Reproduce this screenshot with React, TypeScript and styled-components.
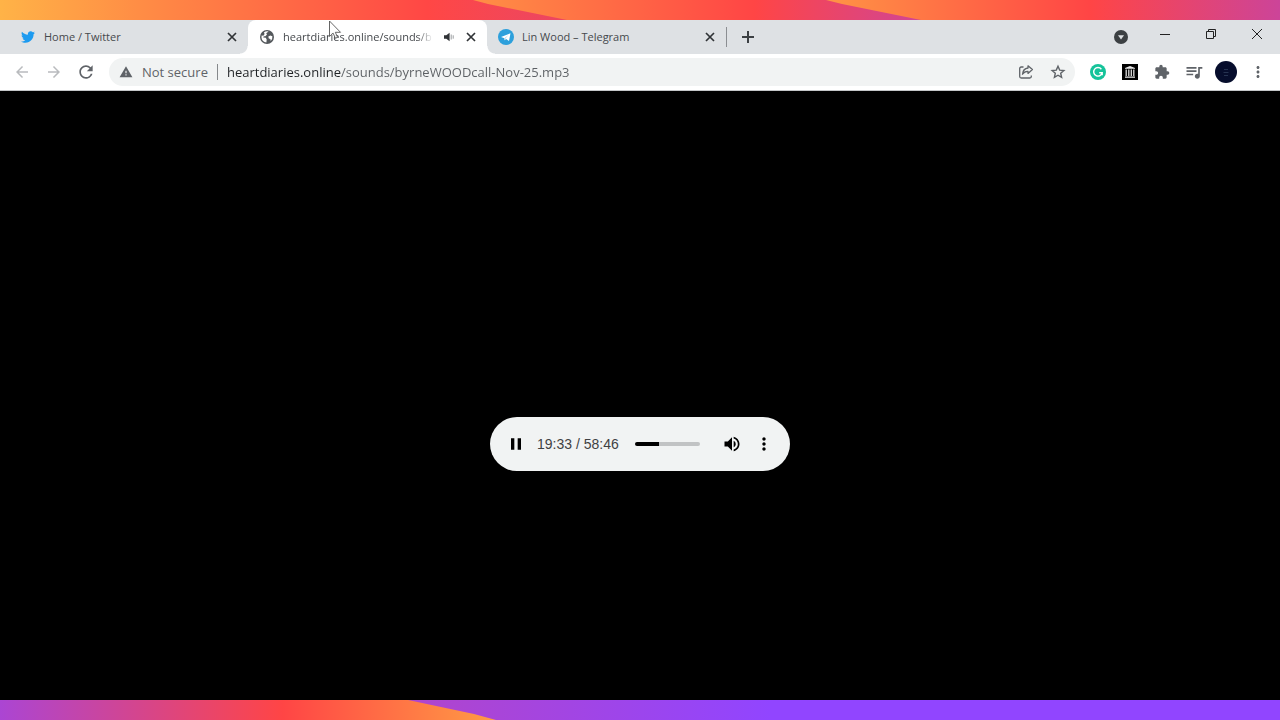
import React, { useState } from "react";
import styled, { createGlobalStyle, css } from "styled-components";
import { FaTwitter } from "react-icons/fa";
import {
  MdArrowBack,
  MdArrowForward,
  MdExtension,
  MdMoreVert,
  MdPause,
  MdQueueMusic,
  MdRefresh,
  MdVolumeUp,
  MdWarning,
} from "react-icons/md";

const GlobalStyle = createGlobalStyle`
  *, *::before, *::after { box-sizing: border-box; }
  body {
    margin: 0;
    background: #000;
    font-family: "Open Sans", "Noto Sans", sans-serif;
  }
  button, input { font: inherit; }
`;

const Screen = styled.div`
  position: relative;
  display: flex;
  flex-direction: column;
  min-height: 100vh;
`;

const Wallpaper = styled.svg`
  display: block;
  flex: none;
  width: 100%;
  height: 20px;
`;

const BrowserWindow = styled.div`
  display: flex;
  flex: 1;
  flex-direction: column;
`;

const TabStrip = styled.header`
  display: flex;
  height: 34px;
  padding-left: 9px;
  background: #dee1e4;
`;

const activeTab = css`
  background: #fff;
  border-radius: 8px 8px 0 0;

  &::before,
  &::after {
    content: "";
    position: absolute;
    bottom: 0;
    width: 8px;
    height: 8px;
  }
  &::before {
    right: 100%;
    background: radial-gradient(circle at 0 0, #dee1e4 7px, #fff 8px);
  }
  &::after {
    left: 100%;
    background: radial-gradient(circle at 100% 0, #dee1e4 7px, #fff 8px);
  }
`;

const Tab = styled.div<{ $active?: boolean }>`
  position: relative;
  display: flex;
  flex: 0 1 239px;
  align-items: center;
  gap: 8px;
  min-width: 0;
  padding: 0 8px 0 11px;
  color: #46494d;
  ${(p) => p.$active && activeTab}
`;

const TabIcon = styled.span`
  display: flex;
  flex: none;
  align-items: center;
  justify-content: center;
  width: 16px;
  height: 16px;
`;

const TabTitle = styled.span<{ $faded?: boolean }>`
  flex: 1;
  min-width: 0;
  overflow: hidden;
  font-size: 11px;
  line-height: 16px;
  white-space: nowrap;
  ${(p) =>
    p.$faded &&
    css`
      mask-image: linear-gradient(to right, #000 calc(100% - 16px), transparent);
    `}
`;

const TabActions = styled.div`
  display: flex;
  flex: none;
  gap: 6px;
`;

const PlainButton = styled.button`
  display: flex;
  flex: none;
  align-items: center;
  justify-content: center;
  padding: 0;
  border: 0;
  background: none;
  color: inherit;
`;

const TabButton = styled(PlainButton)`
  width: 16px;
  height: 16px;
  color: #303336;
`;

const TabDivider = styled.span`
  flex: none;
  align-self: center;
  width: 1px;
  height: 20px;
  background: #8b8e92;
`;

const NewTabButton = styled(PlainButton)`
  width: 28px;
  margin-left: 7px;
  color: #3c4043;
`;

const WindowControls = styled.div`
  display: flex;
  align-items: flex-start;
  margin-left: auto;
`;

const TabSearchButton = styled(PlainButton)`
  width: 32px;
  height: 34px;
  margin-right: 5px;
`;

const WindowButton = styled(PlainButton)`
  width: 46px;
  height: 28px;
  color: #222;
`;

const Toolbar = styled.nav`
  display: flex;
  align-items: center;
  height: 37px;
  padding: 0 6px;
  border-bottom: 1px solid #c4c6c8;
  background: #fff;
`;

const ToolButton = styled(PlainButton)<{ $dim?: boolean }>`
  width: 32px;
  height: 28px;
  color: ${(p) => (p.$dim ? "#b9bbbe" : "#5f6368")};
`;

const AddressBar = styled.form`
  display: flex;
  flex: 1;
  align-items: center;
  min-width: 0;
  height: 28px;
  margin: 0 7px;
  padding: 0 1px 0 10px;
  border-radius: 14px;
  background: #f1f3f3;
  color: #5f6368;
  font-size: 13px;
  line-height: 20px;
`;

const SecurityButton = styled(PlainButton)`
  gap: 9px;
  padding-right: 9px;
  border-right: 1px solid #85888b;
  line-height: 16px;
`;

/* The host part of the address is darker than its path. */
const AddressInput = styled.input`
  flex: 1;
  min-width: 0;
  margin-left: 9px;
  padding: 0;
  border: 0;
  outline: 0;
  background: linear-gradient(to right, #202326 114px, #5c6064 114px);
  background-clip: text;
  color: #5c6064;
  -webkit-text-fill-color: transparent;
`;

const Page = styled.main`
  display: flex;
  flex: 1;
  align-items: center;
  justify-content: center;
  padding-top: 96px;
  background: #000;
`;

const Player = styled.section`
  display: flex;
  align-items: center;
  width: 300px;
  height: 54px;
  padding: 0 10px;
  border-radius: 27px;
  background: #f1f3f3;
  color: #000;
`;

const PlayerButton = styled(PlainButton)`
  width: 32px;
  height: 32px;
`;

const PlayerTime = styled.span`
  margin-left: 5px;
  color: #3f4143;
  font-family: "Liberation Sans", Arial, sans-serif;
  font-size: 14px;
  line-height: 20px;
  white-space: nowrap;
`;

const Timeline = styled.input`
  flex: 1;
  min-width: 0;
  height: 4px;
  margin: 0 16px;
  border-radius: 2px;
  outline: 0;
  appearance: none;

  &::-webkit-slider-thumb {
    appearance: none;
    width: 4px;
    height: 4px;
    border-radius: 2px;
    background: transparent;
  }
`;

const Pointer = styled.svg`
  position: absolute;
  top: 20px;
  left: 329px;
  pointer-events: none;
`;

const GlobeIcon = () => (
  <svg width="16" height="16" viewBox="0 0 16 16" aria-hidden="true">
    <circle cx="8" cy="8" r="7" fill="#54585c" />
    <path
      d="M9.600 2.600 7.200 4.200l.8 1.200L6.400 7.200H4.800l-.6 1.200 2.600.4.900 1.700-.3 3A5.600 5.600 0 0 1 2.500 8.800L2.600 6.500 4.400 6.700 5.600 5 4.900 3.400A5.600 5.600 0 0 1 9.600 2.600Z"
      fill="#fff"
    />
    <path d="M13.400 7.200 11.300 6.600 9.300 7.600l.5 1.900 1.600.5.300 1.900A5.600 5.600 0 0 0 13.400 7.200Z" fill="#fff" />
  </svg>
);

const TelegramIcon = () => (
  <svg width="16" height="16" viewBox="0 0 16 16" aria-hidden="true">
    <circle cx="8" cy="8" r="8" fill="#2da0dc" />
    <path d="M3 7.9 12.5 4.2 11 12 8.1 9.9 6.6 11.3 6.4 9.2Z" fill="#fff" />
    <path d="m6.4 9.2 4-3.2-2.9 3.5-.9 1.8Z" fill="#b4d7ec" />
  </svg>
);

const SoundIcon = () => (
  <svg width="12" height="12" viewBox="0 0 12 12" aria-hidden="true">
    <path d="M1 4.200h2.300L6.600 1.800v8.400L3.300 7.800H1Z" fill="currentColor" />
    <path d="M8.200 3.500v5M10.200 4.300v3.400" fill="none" stroke="#9a9da0" />
  </svg>
);

const CloseTabIcon = () => (
  <svg width="16" height="16" viewBox="0 0 16 16" aria-hidden="true">
    <path d="m4 4 8 8M12 4l-8 8" stroke="currentColor" strokeWidth="1.700" />
  </svg>
);

const PlusIcon = () => (
  <svg width="12" height="12" viewBox="0 0 12 12" aria-hidden="true">
    <path d="M6 0v12M0 6h12" stroke="currentColor" strokeWidth="2" />
  </svg>
);

const StarIcon = () => (
  <svg width="16" height="16" viewBox="0 0 16 16" aria-hidden="true">
    <path
      d="m8 2.200 1.700 3.900 4.200.4-3.200 2.800.9 4.100L8 11.200l-3.600 2.200.9-4.100L2.100 6.500l4.200-.4Z"
      fill="none"
      stroke="currentColor"
      strokeWidth="1.400"
    />
  </svg>
);

const TabSearchIcon = () => (
  <svg width="14" height="14" viewBox="0 0 14 14" aria-hidden="true">
    <circle cx="7" cy="7" r="7" fill="#3c4043" />
    <path d="M4 5.2h6L7 9.4Z" fill="#dee1e4" />
  </svg>
);

const MinimizeIcon = () => (
  <svg width="10" height="10" viewBox="0 0 10 10" aria-hidden="true">
    <path d="M0 5.5h10" stroke="currentColor" />
  </svg>
);

const RestoreIcon = () => (
  <svg width="10" height="10" viewBox="0 0 10 10" fill="none" stroke="currentColor" aria-hidden="true">
    <path d="M.5 2.5h7v7h-7ZM2.5 2.5v-2h7v7h-2" />
  </svg>
);

const CloseWindowIcon = () => (
  <svg width="10" height="10" viewBox="0 0 10 10" stroke="currentColor" aria-hidden="true">
    <path d="m0 0 10 10M10 0 0 10" />
  </svg>
);

const ShareIcon = () => (
  <svg
    width="16"
    height="16"
    viewBox="0 0 16 16"
    fill="none"
    stroke="currentColor"
    strokeWidth="1.3"
    strokeLinejoin="round"
    aria-hidden="true"
  >
    <path d="M5.500 3H3.200Q1.700 3 1.700 4.500v8Q1.700 14 3.200 14h8.600q1.500 0 1.500-1.500V11.500" />
    <path d="M10 1.800 14.400 5.600 10 9.400V7.400Q6.500 7.200 4.500 10.200 5 4.700 10 4Z" />
  </svg>
);

const GrammarlyIcon = () => (
  <svg width="16" height="16" viewBox="0 0 16 16" aria-hidden="true">
    <circle cx="8" cy="8" r="8" fill="#15c39a" />
    <path
      d="M11.400 5.200A4.300 4.300 0 1 0 12.200 8.700H9.200M12.200 8.700V11.300"
      fill="none"
      stroke="#fff"
      strokeWidth="1.4"
    />
  </svg>
);

const ArchiveIcon = () => (
  <svg width="16" height="16" viewBox="0 0 16 16" aria-hidden="true">
    <path d="M0 0h16v16H0Z" fill="#000" />
    <path d="M3 4 8 2l5 2v.8H3ZM3 12.500h10v1.200H3Z" fill="#eee" />
    <path d="M4.200 5.500v6.500M6.800 5.500v6.500M9.300 5.500v6.500M11.800 5.500v6.500" stroke="#ddd" strokeWidth="1.300" />
  </svg>
);

const ProfileIcon = () => (
  <svg width="22" height="22" viewBox="0 0 22 22" aria-hidden="true">
    <circle cx="11" cy="11" r="11" fill="#060d2c" />
    <path d="M9 8.500h4M8.500 11.500h5M9 14.500h4" stroke="#263351" />
  </svg>
);

const TopWallpaper = () => (
  <Wallpaper viewBox="0 0 1280 20" preserveAspectRatio="none" aria-hidden="true">
    <defs>
      <linearGradient id="top-a" gradientUnits="userSpaceOnUse" x1="0" y1="0" x2="570" y2="0">
        <stop offset="0" stopColor="#ffb347" />
        <stop offset=".25" stopColor="#ff8c45" />
        <stop offset=".75" stopColor="#ff4745" />
        <stop offset="1" stopColor="#ea4664" />
      </linearGradient>
      <linearGradient id="top-b" gradientUnits="userSpaceOnUse" x1="473" y1="0" x2="920" y2="0">
        <stop offset="0" stopColor="#ff8f45" />
        <stop offset=".63" stopColor="#ff4545" />
        <stop offset="1" stopColor="#d14593" />
      </linearGradient>
      <linearGradient id="top-c" gradientUnits="userSpaceOnUse" x1="826" y1="0" x2="1280" y2="0">
        <stop offset="0" stopColor="#ff9445" />
        <stop offset=".58" stopColor="#ff4545" />
        <stop offset="1" stopColor="#cc4499" />
      </linearGradient>
    </defs>
    <path d="M0 0h1280v20H0Z" fill="url(#top-a)" />
    <path d="M473 0H1280v20H567L488 4Z" fill="url(#top-b)" />
    <path d="M826 0h454v20H921L842 4Z" fill="url(#top-c)" />
  </Wallpaper>
);

const BottomWallpaper = () => (
  <Wallpaper viewBox="0 0 1280 20" preserveAspectRatio="none" aria-hidden="true">
    <defs>
      <linearGradient id="bottom-a" gradientUnits="userSpaceOnUse" x1="0" y1="0" x2="496" y2="0">
        <stop offset="0" stopColor="#ab45d3" />
        <stop offset=".57" stopColor="#ff4545" />
        <stop offset="1" stopColor="#ff9c45" />
      </linearGradient>
      <linearGradient id="bottom-b" gradientUnits="userSpaceOnUse" x1="408" y1="0" x2="770" y2="0">
        <stop offset="0" stopColor="#b045cc" />
        <stop offset="1" stopColor="#9145ff" />
      </linearGradient>
    </defs>
    <path d="M0 0h1280v20H0Z" fill="url(#bottom-a)" />
    <path d="M408 0h872v20H496L474 14Z" fill="url(#bottom-b)" />
  </Wallpaper>
);

const DURATION = 3526;

const clock = (seconds: number) =>
  `${Math.floor(seconds / 60)}:${String(seconds % 60).padStart(2, "0")}`;

function AudioPlayer() {
  const [position, setPosition] = useState(1173);
  const played = (position / DURATION) * 100 + 4;

  return (
    <Player aria-label="Audio player">
      <PlayerButton type="button" aria-label="Pause">
        <MdPause size={20} />
      </PlayerButton>
      <PlayerTime>
        {clock(position)} / {clock(DURATION)}
      </PlayerTime>
      <Timeline
        type="range"
        aria-label="Playback position"
        min={0}
        max={DURATION}
        value={position}
        onChange={(e) => setPosition(Number(e.target.value))}
        style={{ background: `linear-gradient(to right, #000 ${played}%, #c1c3c4 ${played}%)` }}
      />
      <PlayerButton type="button" aria-label="Mute">
        <MdVolumeUp size={20} />
      </PlayerButton>
      <PlayerButton type="button" aria-label="More options">
        <MdMoreVert size={20} />
      </PlayerButton>
    </Player>
  );
}

export default function App() {
  const [address, setAddress] = useState("heartdiaries.online/sounds/byrneWOODcall-Nov-25.mp3");

  return (
    <Screen>
      <GlobalStyle />
      <TopWallpaper />
      <BrowserWindow>
        <TabStrip>
          <Tab>
            <TabIcon>
              <FaTwitter size={14} color="#1d9bf0" />
            </TabIcon>
            <TabTitle>Home / Twitter</TabTitle>
            <TabButton type="button" aria-label="Close Home / Twitter">
              <CloseTabIcon />
            </TabButton>
          </Tab>
          <Tab $active>
            <TabIcon>
              <GlobeIcon />
            </TabIcon>
            <TabTitle $faded>heartdiaries.online/sounds/b</TabTitle>
            <TabActions>
              <TabButton type="button" aria-label="Mute tab">
                <SoundIcon />
              </TabButton>
              <TabButton type="button" aria-label="Close heartdiaries.online">
                <CloseTabIcon />
              </TabButton>
            </TabActions>
          </Tab>
          <Tab>
            <TabIcon>
              <TelegramIcon />
            </TabIcon>
            <TabTitle>Lin Wood – Telegram</TabTitle>
            <TabButton type="button" aria-label="Close Lin Wood – Telegram">
              <CloseTabIcon />
            </TabButton>
          </Tab>
          <TabDivider />
          <NewTabButton type="button" aria-label="New tab">
            <PlusIcon />
          </NewTabButton>
          <WindowControls>
            <TabSearchButton type="button" aria-label="Search tabs">
              <TabSearchIcon />
            </TabSearchButton>
            <WindowButton type="button" aria-label="Minimize">
              <MinimizeIcon />
            </WindowButton>
            <WindowButton type="button" aria-label="Restore">
              <RestoreIcon />
            </WindowButton>
            <WindowButton type="button" aria-label="Close window">
              <CloseWindowIcon />
            </WindowButton>
          </WindowControls>
        </TabStrip>
        <Toolbar aria-label="Browser toolbar">
          <ToolButton type="button" aria-label="Back" $dim>
            <MdArrowBack size={18} />
          </ToolButton>
          <ToolButton type="button" aria-label="Forward" $dim>
            <MdArrowForward size={18} />
          </ToolButton>
          <ToolButton type="button" aria-label="Reload">
            <MdRefresh size={20} />
          </ToolButton>
          <AddressBar onSubmit={(e) => e.preventDefault()}>
            <SecurityButton type="button">
              <MdWarning size={14} />
              Not secure
            </SecurityButton>
            <AddressInput
              aria-label="Address"
              spellCheck={false}
              value={address}
              onChange={(e) => setAddress(e.target.value)}
            />
            <ToolButton type="button" aria-label="Share this page">
              <ShareIcon />
            </ToolButton>
            <ToolButton type="button" aria-label="Bookmark this page">
              <StarIcon />
            </ToolButton>
          </AddressBar>
          <ToolButton type="button" aria-label="Grammarly">
            <GrammarlyIcon />
          </ToolButton>
          <ToolButton type="button" aria-label="Web archive">
            <ArchiveIcon />
          </ToolButton>
          <ToolButton type="button" aria-label="Extensions">
            <MdExtension size={16} />
          </ToolButton>
          <ToolButton type="button" aria-label="Media controls">
            <MdQueueMusic size={20} />
          </ToolButton>
          <ToolButton type="button" aria-label="Profile">
            <ProfileIcon />
          </ToolButton>
          <ToolButton type="button" aria-label="Browser menu">
            <MdMoreVert size={18} />
          </ToolButton>
        </Toolbar>
        <Page>
          <AudioPlayer />
        </Page>
      </BrowserWindow>
      <BottomWallpaper />
      <Pointer width="13" height="20" viewBox="0 0 13 20" aria-hidden="true">
        <path
          d="M.5 1v15.500l3.600-3.400 2.300 5.200 2.200-1-2.300-5H11.500Z"
          fill="#fff"
          fillOpacity=".85"
          stroke="#555"
          strokeWidth=".9"
        />
      </Pointer>
    </Screen>
  );
}
